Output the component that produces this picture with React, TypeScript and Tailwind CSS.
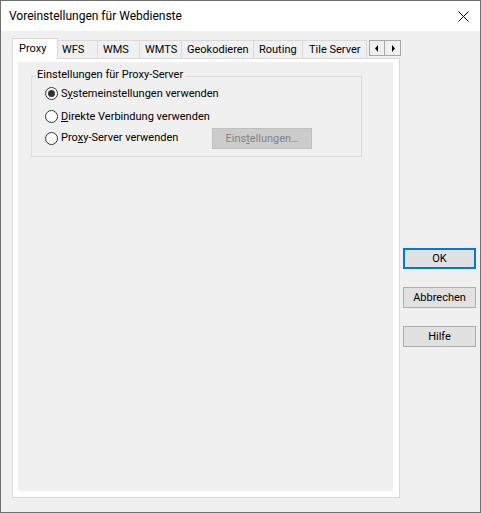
import React from "react";

const font = { fontFamily: '"Segoe UI", Roboto, "Liberation Sans", sans-serif' };

function Radio({ checked, children }: { checked?: boolean; children: React.ReactNode }) {
  return (
    <div className="flex items-center">
      <span className="w-[13px] h-[13px] rounded-full border border-[#333333] bg-white flex items-center justify-center shrink-0">
        {checked && <span className="w-[7px] h-[7px] rounded-full bg-[#333333]" />}
      </span>
      <span className="ml-[3px] text-[11px] leading-[16px] text-black whitespace-nowrap">{children}</span>
    </div>
  );
}

function Tab({ label, w, pl }: { label: string; w: string; pl: string }) {
  return (
    <div
      className={`${w} ${pl} h-[18px] border-t border-r border-[#d9d9d9] bg-[#f0f0f0] flex justify-start pt-[1px] text-[11px] leading-[16px] text-black whitespace-nowrap overflow-hidden shrink-0`}
    >
      {label}
    </div>
  );
}

function Btn({ children, def }: { children: React.ReactNode; def?: boolean }) {
  return (
    <div
      className={`w-[73px] h-[21px] flex items-center justify-center text-[11px] leading-[16px] text-black bg-[#e1e1e1] ${
        def ? "border-2 border-[#0078d7]" : "border border-[#adadad]"
      }`}
    >
      {children}
    </div>
  );
}

export default function App() {
  return (
    <div className="w-[481px] h-[513px] border border-[#707070] bg-[#f0f0f0] flex flex-col overflow-hidden" style={font}>
      <div className="h-[30px] bg-white flex items-center justify-between shrink-0">
        <span className="ml-[8px] text-[12px] leading-[16px] text-black">Voreinstellungen für Webdienste</span>
        <svg width="11" height="11" viewBox="0 0 11 11" className="mr-[11px]">
          <path d="M0.5 0.5 L10.5 10.5 M10.5 0.5 L0.5 10.5" stroke="#000" strokeWidth="1" />
        </svg>
      </div>
      <div className="flex">
        <div className="ml-[11px] mt-[7px] w-[388px] flex flex-col">
          <div className="h-[20px] flex items-end">
            <div className="relative z-10 w-[46px] h-[21px] mb-[-1px] border-l border-t border-r border-[#d9d9d9] bg-white flex justify-start pl-[6px] pt-[2px] text-[11px] leading-[16px] text-black shrink-0">
              Proxy
            </div>
            <Tab label="WFS" w="w-[40px]" pl="pl-[4px]" />
            <Tab label="WMS" w="w-[42px]" pl="pl-[5px]" />
            <Tab label="WMTS" w="w-[42px]" pl="pl-[5px]" />
            <Tab label="Geokodieren" w="w-[72px]" pl="pl-[5px]" />
            <Tab label="Routing" w="w-[49px]" pl="pl-[5px]" />
            <Tab label="Tile Server" w="w-[64px]" pl="pl-[6px]" />
            <div className="ml-[2px] self-start mt-[2px] flex shrink-0">
              <div className="w-[16px] h-[16px] border border-[#a7a7a7] bg-[#f0f0f0] flex items-center justify-center">
                <svg width="4" height="7" viewBox="0 0 4 7">
                  <path d="M3 0 L0 3.5 L3 7 Z" fill="#000" />
                </svg>
              </div>
              <div className="w-[16px] h-[16px] border border-l-0 border-[#a7a7a7] bg-[#f0f0f0] flex items-center justify-center">
                <svg width="4" height="7" viewBox="0 0 4 7">
                  <path d="M1 0 L4 3.5 L1 7 Z" fill="#000" />
                </svg>
              </div>
            </div>
          </div>
          <div className="h-[440px] border border-[#d9d9d9] bg-white pt-[3px] pl-[5px] pr-[6px] pb-[6px]">
            <div className="w-full h-full bg-[#f0f0f0] pt-[14px] pl-[13px]">
              <div className="relative w-[331px] border border-[#dcdcdc] pl-[13px] pt-[6px] pb-[7px]">
                <span className="absolute left-[3px] top-[-10px] px-[2px] bg-[#f0f0f0] text-[11px] leading-[16px] text-black whitespace-nowrap">
                  Einstellungen für Proxy-Server
                </span>
                <div className="h-[21px] flex items-center">
                  <Radio checked>
                    S<u>y</u>stemeinstellungen verwenden
                  </Radio>
                </div>
                <div className="h-[21px] mt-[2px] flex items-center">
                  <Radio>
                    <u>D</u>irekte Verbindung verwenden
                  </Radio>
                </div>
                <div className="h-[22px] flex items-center">
                  <Radio>
                    Pro<u>x</u>y-Server verwenden
                  </Radio>
                  <div className="ml-auto mr-[49px] self-start mt-[1px] w-[100px] h-[21px] border border-[#bfbfbf] bg-[#cccccc] flex items-center justify-center text-[11px] leading-[16px] text-[#838383]">
                    Eins<u>t</u>ellungen…
                  </div>
                </div>
              </div>
            </div>
          </div>
        </div>
        <div className="ml-[3px] mt-[217px] flex flex-col gap-[18px]">
          <Btn def>OK</Btn>
          <Btn>Abbrechen</Btn>
          <Btn>Hilfe</Btn>
        </div>
      </div>
    </div>
  );
}
